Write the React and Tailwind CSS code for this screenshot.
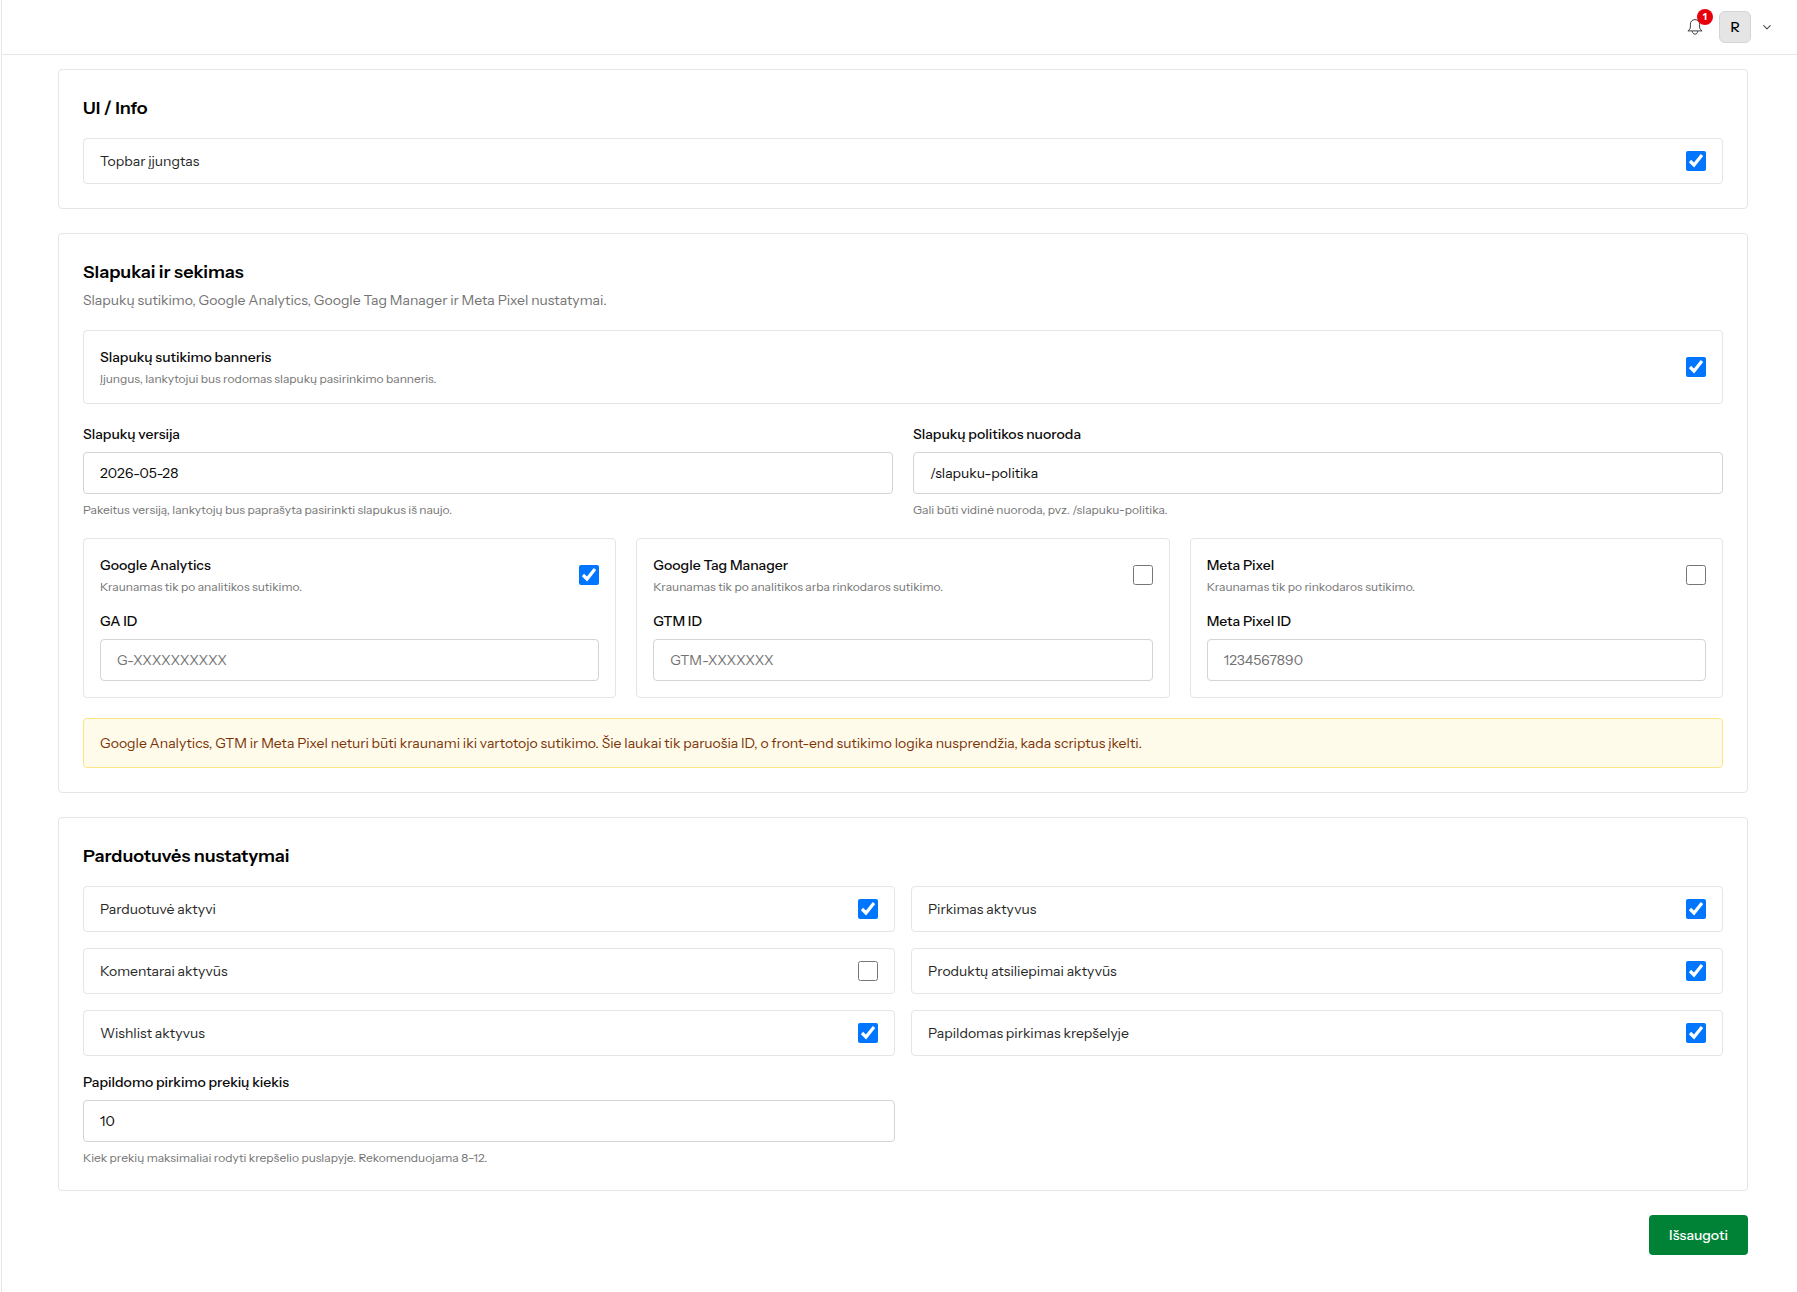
const labelText = "text-sm leading-5 font-medium text-neutral-950";
const helpText = "text-xs leading-4 text-neutral-500";

function BellIcon() {
  return (
    <svg viewBox="0 0 16 16" fill="none" stroke="currentColor" strokeLinejoin="round" className="size-4" aria-hidden="true">
      <path d="M8 .6C5.3.6 3.4 2.600 3.400 5.200V8c0 1.800-.9 2.700-2.500 3.900h14.200c-1.600-1.200-2.500-2.100-2.500-3.900V5.200C12.600 2.600 10.700.6 8 .6Z" />
      <path d="M5.300 12.100c.2 1.900 1.200 3.100 2.700 3.100s2.500-1.200 2.700-3.100" />
    </svg>
  );
}

function ChevronIcon() {
  return (
    <svg viewBox="0 0 12 12" fill="none" stroke="currentColor" strokeWidth="1.2" strokeLinecap="round" strokeLinejoin="round" className="size-3 text-neutral-600" aria-hidden="true">
      <path d="M2.800 4.600 6 7.800l3.200-3.200" />
    </svg>
  );
}

function Check({ id, on }) {
  return <input id={id} type="checkbox" defaultChecked={on} className="size-5 shrink-0" />;
}

function Section({ title, description, children }) {
  return (
    <section className="rounded border border-neutral-200 p-6">
      <h2 className="text-lg leading-7 font-semibold text-black">{title}</h2>
      {description && <p className="mt-1 text-sm leading-5 text-neutral-500">{description}</p>}
      {children}
    </section>
  );
}

function ToggleRow({ id, label, on }) {
  return (
    <label
      htmlFor={id}
      className="flex items-center justify-between gap-4 rounded border border-neutral-200 px-4 py-3"
    >
      <span className="text-sm leading-5 text-neutral-800">{label}</span>
      <Check id={id} on={on} />
    </label>
  );
}

function ToggleHead({ id, label, help, on }) {
  return (
    <label htmlFor={id} className="flex items-center justify-between gap-4">
      <span className="flex flex-col gap-1">
        <span className={labelText}>{label}</span>
        <span className={helpText}>{help}</span>
      </span>
      <Check id={id} on={on} />
    </label>
  );
}

function Field({ id, label, value, placeholder, help }) {
  return (
    <div className="flex flex-col gap-2">
      <label htmlFor={id} className={labelText}>{label}</label>
      <input
        id={id}
        type="text"
        defaultValue={value}
        placeholder={placeholder}
        className="w-full rounded border border-neutral-300 bg-white px-4 py-2.5 text-sm leading-5 text-neutral-950 placeholder:text-neutral-500"
      />
      {help && <p className={helpText}>{help}</p>}
    </div>
  );
}

const trackers = [
  { id: "ga", label: "Google Analytics", help: "Kraunamas tik po analitikos sutikimo.", on: true, field: "GA ID", placeholder: "G-XXXXXXXXXX" },
  { id: "gtm", label: "Google Tag Manager", help: "Kraunamas tik po analitikos arba rinkodaros sutikimo.", on: false, field: "GTM ID", placeholder: "GTM-XXXXXXX" },
  { id: "pixel", label: "Meta Pixel", help: "Kraunamas tik po rinkodaros sutikimo.", on: false, field: "Meta Pixel ID", placeholder: "1234567890" },
];

const shopToggles = [
  { id: "shop", label: "Parduotuvė aktyvi", on: true },
  { id: "purchase", label: "Pirkimas aktyvus", on: true },
  { id: "comments", label: "Komentarai aktyvūs", on: false },
  { id: "reviews", label: "Produktų atsiliepimai aktyvūs", on: true },
  { id: "wishlist", label: "Wishlist aktyvus", on: true },
  { id: "upsell", label: "Papildomas pirkimas krepšelyje", on: true },
];

export default function App() {
  return (
    <div className="ml-px min-h-screen border-l border-neutral-200 bg-white font-['Instrument_Sans','Inter',sans-serif] text-neutral-950">
      <header className="flex items-center justify-end border-b border-neutral-200 py-[11px] pr-6">
        <button type="button" aria-label="Pranešimai" className="relative mr-4 flex size-4 items-center justify-center text-neutral-700">
          <BellIcon />
          <span className="absolute -top-2.5 left-2.5 flex size-4 items-center justify-center rounded-full bg-red-600 text-[10px] leading-4 font-bold text-white">
            1
          </span>
        </button>
        <button type="button" className="flex items-center gap-2.5">
          <span className="flex size-8 items-center justify-center rounded-md border border-neutral-300 bg-neutral-200 text-sm leading-5 font-medium text-black">
            R
          </span>
          <ChevronIcon />
        </button>
      </header>

      <main className="flex flex-col gap-6 pt-3.5 pr-[49px] pb-9 pl-14">
        <Section title="UI / Info">
          <div className="mt-4">
            <ToggleRow id="topbar" label="Topbar įjungtas" on />
          </div>
        </Section>

        <Section
          title="Slapukai ir sekimas"
          description="Slapukų sutikimo, Google Analytics, Google Tag Manager ir Meta Pixel nustatymai."
        >
          <div className="mt-5 flex flex-col gap-5">
            <div className="rounded border border-neutral-200 p-4">
              <ToggleHead
                id="banner"
                label="Slapukų sutikimo banneris"
                help="Įjungus, lankytojui bus rodomas slapukų pasirinkimo banneris."
                on
              />
            </div>
            <div className="grid grid-cols-2 gap-5">
              <Field
                id="version"
                label="Slapukų versija"
                value="2026-05-28"
                help="Pakeitus versiją, lankytojų bus paprašyta pasirinkti slapukus iš naujo."
              />
              <Field
                id="policy"
                label="Slapukų politikos nuoroda"
                value="/slapuku-politika"
                help="Gali būti vidinė nuoroda, pvz. /slapuku-politika."
              />
            </div>
            <div className="grid grid-cols-3 gap-5">
              {trackers.map((t) => (
                <div key={t.id} className="flex flex-col gap-4 rounded border border-neutral-200 p-4">
                  <ToggleHead id={t.id} label={t.label} help={t.help} on={t.on} />
                  <Field id={`${t.id}-id`} label={t.field} placeholder={t.placeholder} />
                </div>
              ))}
            </div>
            <p className="rounded border border-amber-200 bg-amber-50 px-4 py-3.5 text-sm leading-5 text-amber-900">
              Google Analytics, GTM ir Meta Pixel neturi būti kraunami iki vartotojo sutikimo. Šie laukai tik paruošia ID, o front-end sutikimo logika nusprendžia, kada scriptus įkelti.
            </p>
          </div>
        </Section>

        <Section title="Parduotuvės nustatymai">
          <div className="mt-4 grid grid-cols-2 gap-4">
            {shopToggles.map((t) => (
              <ToggleRow key={t.id} id={t.id} label={t.label} on={t.on} />
            ))}
            <Field
              id="upsell-count"
              label="Papildomo pirkimo prekių kiekis"
              value="10"
              help="Kiek prekių maksimaliai rodyti krepšelio puslapyje. Rekomenduojama 8–12."
            />
          </div>
        </Section>

        <button type="button" className="self-end rounded bg-green-700 px-5 py-2.5 text-sm leading-5 font-medium text-white">
          Išsaugoti
        </button>
      </main>
    </div>
  );
}
